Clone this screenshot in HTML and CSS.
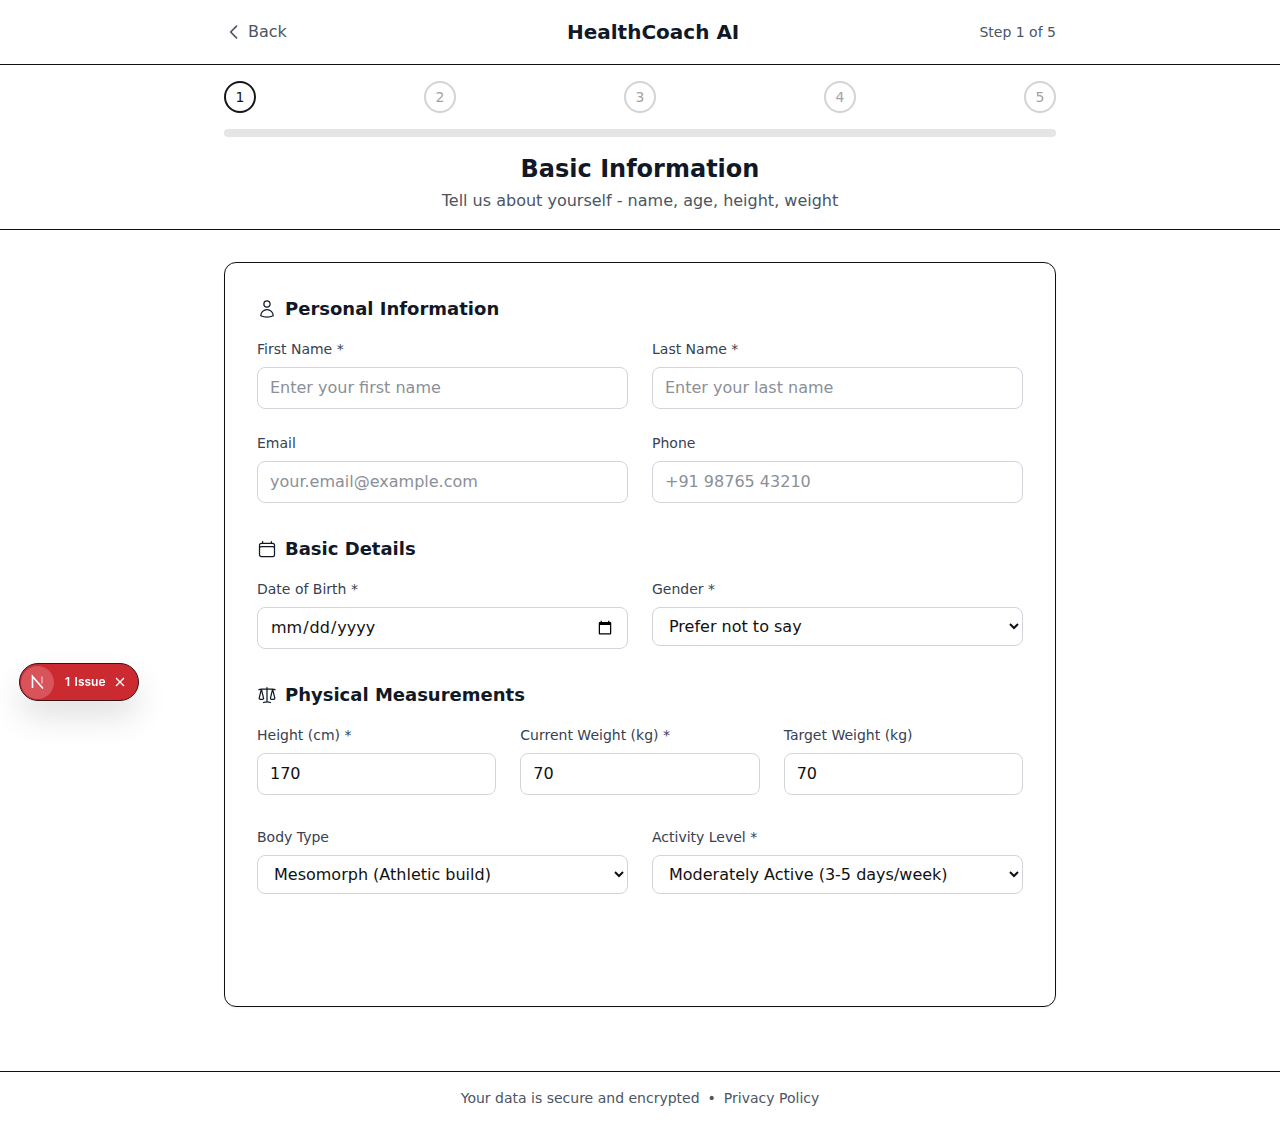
FILE: index.html
```html
<!DOCTYPE html>
<html lang="en">
<head>
  <meta charset="UTF-8">
  <meta name="viewport" content="width=device-width, initial-scale=1.0">
  <title>HealthCoach AI</title>
  <link rel="stylesheet" href="styles.css">
</head>
<body>
  <header class="top-bar">
    <div class="top-inner">
      <a class="back-link" href="#">
        <svg class="back-icon" viewBox="0 0 24 24" width="20" height="20"><path d="M15 19l-7-7 7-7"/></svg>
        <span>Back</span>
      </a>
      <div class="brand">HealthCoach AI</div>
      <div class="step-count">Step 1 of 5</div>
    </div>
  </header>

  <section class="progress">
    <div class="progress-inner">
      <div class="steps">
        <div class="step active">1</div>
        <div class="step">2</div>
        <div class="step">3</div>
        <div class="step">4</div>
        <div class="step">5</div>
      </div>
      <div class="track"></div>
      <h1>Basic Information</h1>
      <p class="subtitle">Tell us about yourself - name, age, height, weight</p>
    </div>
  </section>

  <main class="content">
    <form class="card">
      <h2 class="section-title">
        <svg class="icon" viewBox="0 0 24 24" width="20" height="20"><path d="M15.75 6a3.75 3.75 0 1 1-7.5 0 3.75 3.75 0 0 1 7.5 0ZM4.501 20.118a7.5 7.5 0 0 1 14.998 0A17.933 17.933 0 0 1 12 21.75c-2.676 0-5.216-.584-7.499-1.632Z"/></svg>
        Personal Information
      </h2>
      <div class="grid two">
        <div class="field">
          <label for="first_name">First Name *</label>
          <input type="text" id="first_name" placeholder="Enter your first name">
        </div>
        <div class="field">
          <label for="last_name">Last Name *</label>
          <input type="text" id="last_name" placeholder="Enter your last name">
        </div>
        <div class="field">
          <label for="email">Email</label>
          <input type="text" id="email" placeholder="your.email@example.com">
        </div>
        <div class="field">
          <label for="phone">Phone</label>
          <input type="text" id="phone" placeholder="+91 98765 43210">
        </div>
      </div>

      <h2 class="section-title">
        <svg class="icon" viewBox="0 0 24 24" width="20" height="20"><path d="M6.75 3v2.25M17.25 3v2.25M3 18.75V7.5a2.25 2.25 0 0 1 2.25-2.25h13.5A2.25 2.25 0 0 1 21 7.5v11.25m-18 0A2.25 2.25 0 0 0 5.25 21h13.5A2.25 2.25 0 0 0 21 18.75m-18 0v-7.5A2.25 2.25 0 0 1 5.25 9h13.5A2.25 2.25 0 0 1 21 11.25v7.5"/></svg>
        Basic Details
      </h2>
      <div class="grid two">
        <div class="field">
          <label for="dob">Date of Birth *</label>
          <input type="date" id="dob">
        </div>
        <div class="field">
          <label for="gender">Gender *</label>
          <select id="gender">
            <option>Prefer not to say</option>
          </select>
        </div>
      </div>

      <h2 class="section-title">
        <svg class="icon" viewBox="0 0 24 24" width="20" height="20"><path d="M12 3v17.25m0 0c-1.472 0-2.882.265-4.185.75M12 20.25c1.472 0 2.882.265 4.185.75M18.75 4.97A48.416 48.416 0 0 0 12 4.5c-2.291 0-4.545.16-6.75.47m13.5 0c1.01.143 2.01.317 3 .52m-3-.52 2.62 10.726c.122.499-.106 1.028-.589 1.202a5.988 5.988 0 0 1-2.031.352 5.988 5.988 0 0 1-2.031-.352c-.483-.174-.711-.703-.59-1.202L18.75 4.971Zm-16.5.52c.99-.203 1.99-.377 3-.52m0 0 2.62 10.726c.122.499-.106 1.028-.589 1.202a5.989 5.989 0 0 1-2.031.352 5.989 5.989 0 0 1-2.031-.352c-.483-.174-.711-.703-.59-1.202L5.25 4.971Z"/></svg>
        Physical Measurements
      </h2>
      <div class="grid three">
        <div class="field">
          <label for="height">Height (cm) *</label>
          <input type="text" id="height" value="170">
        </div>
        <div class="field">
          <label for="weight">Current Weight (kg) *</label>
          <input type="text" id="weight" value="70">
        </div>
        <div class="field">
          <label for="target">Target Weight (kg)</label>
          <input type="text" id="target" value="70">
        </div>
      </div>
      <div class="grid two body-row">
        <div class="field">
          <label for="body_type">Body Type</label>
          <select id="body_type">
            <option>Mesomorph (Athletic build)</option>
          </select>
        </div>
        <div class="field">
          <label for="activity">Activity Level *</label>
          <select id="activity">
            <option>Moderately Active (3-5 days/week)</option>
          </select>
        </div>
      </div>
    </form>
  </main>

  <footer class="page-footer">
    <span>Your data is secure and encrypted</span>
    <span class="dot">•</span>
    <a href="#">Privacy Policy</a>
  </footer>

  <div class="issue-badge">
    <span class="issue-logo">
      <svg class="issue-mark" viewBox="0 0 16 16" width="16" height="16"><path d="M2.5 14V2.5L13 14.5"/><path class="fade" d="M12 2.5v7"/></svg>
    </span>
    <span class="issue-text">1 Issue</span>
    <svg class="issue-close" viewBox="0 0 14 14" width="14" height="14"><path d="M3 3l8 8M11 3l-8 8"/></svg>
  </div>
</body>
</html>
```

FILE: styles.css
```css
* {
  box-sizing: border-box;
}

body {
  margin: 0;
  background-color: #fff;
  color: #111827;
  font-family: "DejaVu Sans", sans-serif;
  font-size: 16px;
  line-height: 1.5;
}

a {
  color: inherit;
  text-decoration: none;
}

.top-bar {
  height: 65px;
  border-bottom: 1px solid #111;
}

.top-inner {
  width: 832px;
  height: 64px;
  margin: 0 auto;
  display: flex;
  align-items: center;
  justify-content: space-between;
}

.back-link {
  display: flex;
  align-items: center;
  gap: 4px;
  color: #4b5563;
  font-size: 16px;
}

.back-icon {
  fill: none;
  stroke: #4b5563;
  stroke-width: 2;
  stroke-linecap: round;
  stroke-linejoin: round;
}

.brand {
  font-size: 20px;
  font-weight: 700;
  color: #111827;
  margin-left: 40px;
}

.step-count {
  font-size: 14px;
  color: #4b5563;
}

.progress {
  border-bottom: 1px solid #111;
  height: 165px;
}

.progress-inner {
  width: 832px;
  margin: 0 auto;
  padding-top: 16px;
  text-align: center;
}

.steps {
  display: flex;
  justify-content: space-between;
}

.step {
  width: 32px;
  height: 32px;
  border: 2px solid #d4d4d4;
  border-radius: 50%;
  display: flex;
  align-items: center;
  justify-content: center;
  font-size: 14px;
  color: #a3a3a3;
}

.step.active {
  border-color: #171717;
  color: #171717;
}

.track {
  height: 8px;
  margin-top: 16px;
  border-radius: 4px;
  background-color: #e5e5e5;
}

h1 {
  margin: 16px 0 0;
  font-size: 24px;
  line-height: 32px;
  font-weight: 700;
}

.subtitle {
  margin: 4px 0 0;
  font-size: 16px;
  color: #4b5563;
}

.content {
  width: 832px;
  margin: 32px auto 64px;
}

.card {
  height: 745px;
  padding: 32px;
  border: 1px solid #111;
  border-radius: 12px;
  box-shadow: 0 1px 2px rgba(0, 0, 0, 0.05);
}

.section-title {
  display: flex;
  align-items: center;
  gap: 8px;
  margin: 32px 0 16px;
  font-size: 18px;
  line-height: 28px;
  font-weight: 700;
}

.section-title:first-child {
  margin-top: 0;
}

.icon {
  fill: none;
  stroke: #111827;
  stroke-width: 1.5;
  stroke-linecap: round;
  stroke-linejoin: round;
}

.grid {
  display: grid;
  gap: 24px;
}

.grid.two {
  grid-template-columns: 1fr 1fr;
  align-items: start;
}

.grid.three {
  grid-template-columns: 1fr 1fr 1fr;
}

.body-row {
  margin-top: 32px;
}

.field label {
  display: block;
  margin-bottom: 8px;
  font-size: 14px;
  line-height: 20px;
  color: #374151;
}

.field input,
.field select {
  display: block;
  width: 100%;
  font-family: inherit;
  font-size: 16px;
  line-height: 24px;
  color: #111;
  background-color: #fff;
  border: 1px solid #d1d5db;
  border-radius: 8px;
}

.field input {
  padding: 8px 12px;
}

.field input[type="date"] {
  height: 42px;
}

.field select {
  height: 39px;
  padding: 8px 12px;
}

.field input::placeholder {
  color: #8b8f97;
}

.page-footer {
  height: 53px;
  padding-top: 16px;
  border-top: 1px solid #111;
  display: flex;
  justify-content: center;
  gap: 8px;
  font-size: 14px;
  line-height: 21px;
  color: #4b5563;
}

/* dev overlay, sits over the page */
.issue-badge {
  position: fixed;
  left: 19px;
  top: 663px;
  width: 120px;
  height: 38px;
  display: flex;
  align-items: center;
  padding-left: 1px;
  border-radius: 19px;
  border: 1px solid #3a1216;
  background-color: #ca2a30;
  color: #fff;
  box-shadow: 0 16px 32px rgba(0, 0, 0, 0.12);
  font-family: Inter, sans-serif;
}

.issue-logo {
  width: 33px;
  height: 33px;
  border-radius: 50%;
  background-color: #d9535b;
  display: flex;
  align-items: center;
  justify-content: center;
}

.issue-mark {
  fill: none;
  stroke: #fff;
  stroke-width: 1.6;
}

.issue-mark .fade {
  stroke: rgba(255, 255, 255, 0.5);
}

.issue-text {
  margin-left: 11px;
  font-size: 12px;
  line-height: 18px;
  font-weight: 600;
  word-spacing: 1.5px;
}

.issue-close {
  margin-left: 7px;
  fill: none;
  stroke: #fff;
  stroke-width: 1.3;
}
```
